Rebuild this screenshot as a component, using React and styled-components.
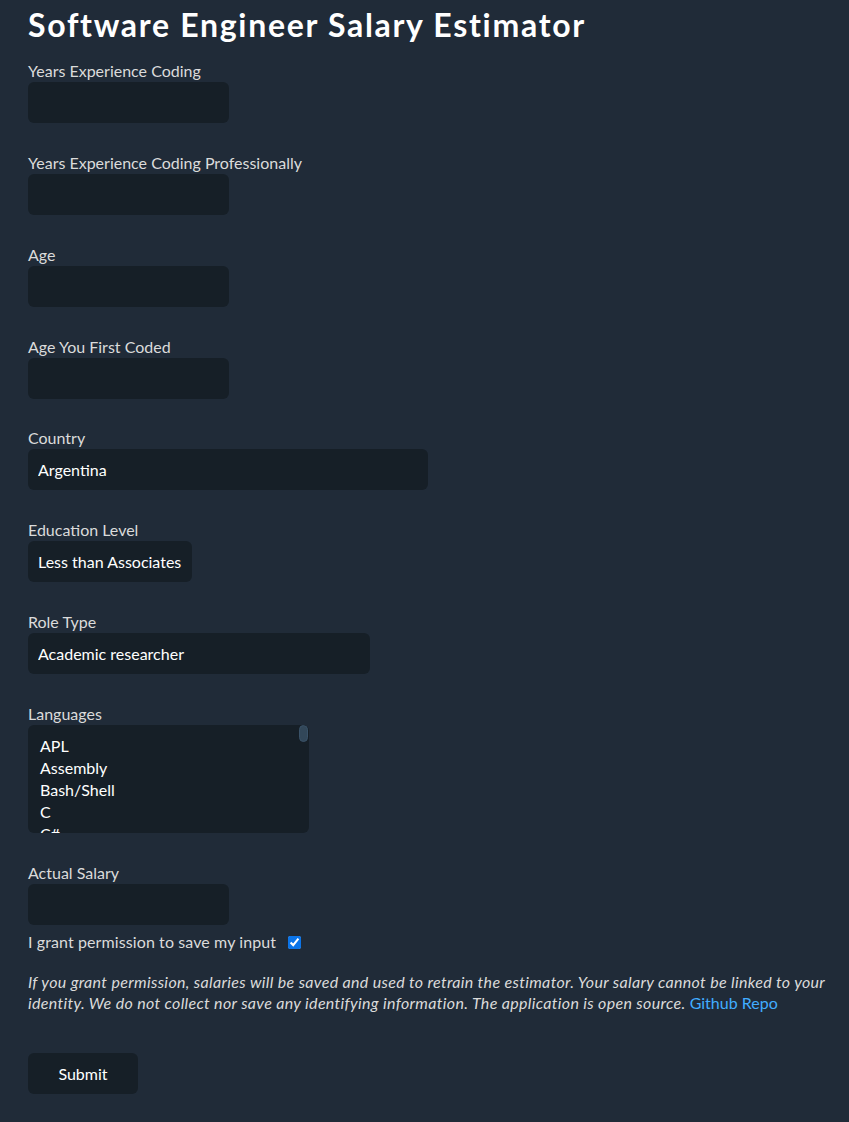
import React from "react";
import styled, { createGlobalStyle } from "styled-components";

const Global = createGlobalStyle`
  html, body { margin: 0; padding: 0; background: #202b38; }
  body {
    font-family: "Segoe UI", Lato, "Noto Sans", sans-serif;
    font-size: 16px;
    color: #dbdbdb;
  }
  * { box-sizing: border-box; }
`;

const Page = styled.main`
  width: 828px;
  padding: 6px 0 28px 28px;
`;

const Title = styled.h1`
  margin: 0 0 16px;
  font-size: 32px;
  line-height: 38px;
  font-weight: 700;
  letter-spacing: 1.7px;
  color: #ffffff;
`;

const Form = styled.form`
  display: flex;
  flex-direction: column;
  align-items: flex-start;
`;

const Field = styled.div`
  display: flex;
  flex-direction: column;
  align-items: flex-start;
  margin-bottom: ${(p) => p.$gap ?? 29}px;
`;

const Label = styled.label`
  display: block;
  line-height: 22px;
  color: #dbdbdb;
`;

const Input = styled.input`
  width: 201px;
  height: 41px;
  margin: 0;
  padding: 0 10px;
  border: none;
  border-radius: 6px;
  background: #161f27;
  color: #ffffff;
  font: inherit;
  outline: none;
`;

const Select = styled.select`
  appearance: none;
  width: ${(p) => p.$w}px;
  height: 41px;
  margin: 0;
  padding: 0 10px;
  border: none;
  border-radius: 6px;
  background: #161f27;
  color: #ffffff;
  font: inherit;
  outline: none;
`;

const ListFrame = styled.div`
  position: relative;
  width: 281px;
  height: 108px;
  border-radius: 6px;
  background: #161f27;
  overflow: hidden;
`;

const ListBox = styled.div`
  height: 100%;
  padding: 10px 0 10px 12px;
  overflow-y: scroll;
  scrollbar-width: none;
  &::-webkit-scrollbar { display: none; }
`;

const Thumb = styled.div`
  position: absolute;
  top: 0;
  right: 1px;
  width: 9px;
  height: 17px;
  border-radius: 5px;
  background: #324759;
  border: 1px solid #3a5268;
`;

const Option = styled.div`
  line-height: 22px;
  color: #ffffff;
`;

const CheckRow = styled.label`
  display: flex;
  align-items: center;
  gap: 12px;
  line-height: 22px;
  letter-spacing: 0.1px;
  color: #dbdbdb;
`;

const Check = styled.input`
  width: 13px;
  height: 13px;
  margin: 0;
  accent-color: #0b74e8;
`;

const Note = styled.p`
  margin: 18px 0 40px;
  font-style: italic;
  line-height: 21px;
  letter-spacing: 0.33px;
  color: #dbdbdb;
`;

const Link = styled.a`
  color: #41adff;
  font-style: normal;
  letter-spacing: 0;
  text-decoration: none;
`;

const Button = styled.button`
  width: 110px;
  height: 41px;
  border: none;
  border-radius: 6px;
  background: #161f27;
  color: #ffffff;
  font: inherit;
  cursor: pointer;
`;

const languages = [
  "APL", "Assembly", "Bash/Shell", "C", "C#", "C++", "COBOL", "Clojure",
  "Crystal", "Dart", "Delphi", "Elixir", "Erlang", "F#", "Fortran", "Go",
  "Groovy", "HTML/CSS", "Haskell", "Java", "JavaScript", "Julia", "Kotlin",
  "LISP", "Lua", "MATLAB", "OCaml", "Objective-C", "PHP", "Perl",
];

export default function App() {
  return (
    <>
      <Global />
      <Page>
        <Title>Software Engineer Salary Estimator</Title>
        <Form onSubmit={(e) => e.preventDefault()}>
          <Field>
            <Label>Years Experience Coding</Label>
            <Input type="text" />
          </Field>
          <Field>
            <Label>Years Experience Coding Professionally</Label>
            <Input type="text" />
          </Field>
          <Field>
            <Label>Age</Label>
            <Input type="text" />
          </Field>
          <Field $gap={28}>
            <Label>Age You First Coded</Label>
            <Input type="text" />
          </Field>
          <Field>
            <Label>Country</Label>
            <Select $w={400} defaultValue="Argentina">
              <option>Argentina</option>
            </Select>
          </Field>
          <Field>
            <Label>Education Level</Label>
            <Select $w={164} defaultValue="Less than Associates">
              <option>Less than Associates</option>
            </Select>
          </Field>
          <Field>
            <Label>Role Type</Label>
            <Select $w={342} defaultValue="Academic researcher">
              <option>Academic researcher</option>
            </Select>
          </Field>
          <Field>
            <Label>Languages</Label>
            <ListFrame>
              <ListBox role="listbox" aria-multiselectable="true">
                {languages.map((l) => (
                  <Option key={l} role="option">{l}</Option>
                ))}
              </ListBox>
              <Thumb />
            </ListFrame>
          </Field>
          <Field $gap={6}>
            <Label>Actual Salary</Label>
            <Input type="text" />
          </Field>
          <CheckRow>
            I grant permission to save my input
            <Check type="checkbox" defaultChecked />
          </CheckRow>
          <Note>
            If you grant permission, salaries will be saved and used to retrain the
            estimator. Your salary cannot be linked to your identity. We do not
            collect nor save any identifying information. The application is open
            source. <Link href="#">Github Repo</Link>
          </Note>
          <Button type="submit">Submit</Button>
        </Form>
      </Page>
    </>
  );
}
